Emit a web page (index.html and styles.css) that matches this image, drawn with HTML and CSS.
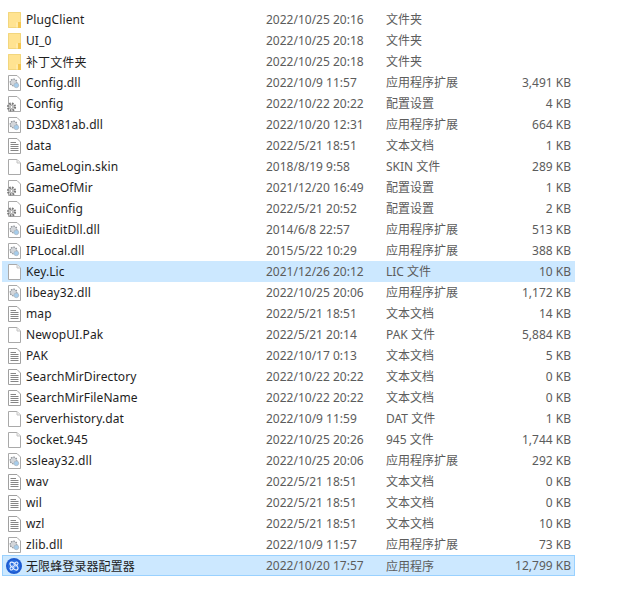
FILE: index.html
```html
<!DOCTYPE html>
<html lang="zh-CN">
<head>
  <meta charset="UTF-8">
  <title>文件列表</title>
  <link rel="stylesheet" href="styles.css">
</head>
<body>
  <!-- shared file type icons -->
  <svg class="defs" width="0" height="0">
    <symbol id="i-folder" viewBox="0 0 16 16">
      <path d="M2 0H15V16H2Z" fill="#ffe391"/>
      <path d="M2.500 .5H14.500V15.500H2.500Z" fill="none" stroke="#f2d67e"/>
      <path d="M12 10H15V16H12Z" fill="#f5c64f"/>
      <path d="M11 10.500V15.500" stroke="#fff1c4"/>
    </symbol>
    <symbol id="i-page" viewBox="0 0 16 16">
      <path d="M2.500 .5H11L14.500 4V15.500H2.500Z" fill="#fff" stroke="#a9a9a9"/>
      <path d="M11 .5V4H14.500" fill="#eee" stroke="#c4c4c4"/>
    </symbol>
    <symbol id="i-text" viewBox="0 0 16 16">
      <path d="M2.500 .5H11L14.500 4V15.500H2.500Z" fill="#fff" stroke="#a0a0a0"/>
      <path d="M4.500 4.500H10M4.500 6.500H12.500M4.500 8.500H12.500M4.500 10.500H12.500M4.500 12.500H12.500" stroke="#858585"/>
    </symbol>
    <symbol id="i-dll" viewBox="0 0 16 16">
      <path d="M2.500 .5H11L14.500 4V15.500H2.500Z" fill="#fff" stroke="#a9a9a9"/>
      <circle cx="7.500" cy="7.500" r="3.300" fill="#d3d6da" stroke="#888c92" stroke-width="1.300" stroke-dasharray="1.500 1"/>
      <circle cx="10.300" cy="10.300" r="2.400" fill="#a6cdec" stroke="#a9b6c2" stroke-width=".8"/>
    </symbol>
    <symbol id="i-config" viewBox="0 0 16 16">
      <path d="M2.500 .5H11L14.500 4V15.500H2.500Z" fill="#fff" stroke="#a9a9a9"/>
      <circle cx="5.500" cy="11" r="3.500" fill="#dcdcdc" stroke="#777" stroke-width="2.200" stroke-dasharray="1.600 1.150"/>
      <circle cx="5.500" cy="11" r="1.500" fill="#fff" stroke="#888" stroke-width=".7"/>
    </symbol>
    <symbol id="i-app" viewBox="0 0 16 16">
      <circle cx="8" cy="8" r="8" fill="#1d5bd1"/>
      <circle cx="8" cy="8" r="6" fill="#2a6fe0"/>
      <ellipse cx="8" cy="8" rx="5" ry="2.300" transform="rotate(45 8 8)" fill="none" stroke="#e4edff" stroke-width="1.200"/>
      <ellipse cx="6" cy="10" rx="2.300" ry="1.500" transform="rotate(-45 6 10)" fill="none" stroke="#e4edff"/>
      <ellipse cx="10" cy="6" rx="2.300" ry="1.500" transform="rotate(-45 10 6)" fill="none" stroke="#e4edff"/>
    </symbol>
  </svg>

  <div class="file-list">
    <div class="row"><div class="name"><svg class="icon"><use href="#i-folder"/></svg>PlugClient</div><div class="date">2022/10/25 20:16</div><div class="type">文件夹</div><div class="size"></div></div>
    <div class="row"><div class="name"><svg class="icon"><use href="#i-folder"/></svg>UI_0</div><div class="date">2022/10/25 20:18</div><div class="type">文件夹</div><div class="size"></div></div>
    <div class="row"><div class="name"><svg class="icon"><use href="#i-folder"/></svg>补丁文件夹</div><div class="date">2022/10/25 20:18</div><div class="type">文件夹</div><div class="size"></div></div>
    <div class="row"><div class="name"><svg class="icon"><use href="#i-dll"/></svg>Config.dll</div><div class="date">2022/10/9 11:57</div><div class="type">应用程序扩展</div><div class="size">3,491 KB</div></div>
    <div class="row"><div class="name"><svg class="icon"><use href="#i-config"/></svg>Config</div><div class="date">2022/10/22 20:22</div><div class="type">配置设置</div><div class="size">4 KB</div></div>
    <div class="row"><div class="name"><svg class="icon"><use href="#i-dll"/></svg>D3DX81ab.dll</div><div class="date">2022/10/20 12:31</div><div class="type">应用程序扩展</div><div class="size">664 KB</div></div>
    <div class="row"><div class="name"><svg class="icon"><use href="#i-text"/></svg>data</div><div class="date">2022/5/21 18:51</div><div class="type">文本文档</div><div class="size">1 KB</div></div>
    <div class="row"><div class="name"><svg class="icon"><use href="#i-page"/></svg>GameLogin.skin</div><div class="date">2018/8/19 9:58</div><div class="type">SKIN 文件</div><div class="size">289 KB</div></div>
    <div class="row"><div class="name"><svg class="icon"><use href="#i-config"/></svg>GameOfMir</div><div class="date">2021/12/20 16:49</div><div class="type">配置设置</div><div class="size">1 KB</div></div>
    <div class="row"><div class="name"><svg class="icon"><use href="#i-config"/></svg>GuiConfig</div><div class="date">2022/5/21 20:52</div><div class="type">配置设置</div><div class="size">2 KB</div></div>
    <div class="row"><div class="name"><svg class="icon"><use href="#i-dll"/></svg>GuiEditDll.dll</div><div class="date">2014/6/8 22:57</div><div class="type">应用程序扩展</div><div class="size">513 KB</div></div>
    <div class="row"><div class="name"><svg class="icon"><use href="#i-dll"/></svg>IPLocal.dll</div><div class="date">2015/5/22 10:29</div><div class="type">应用程序扩展</div><div class="size">388 KB</div></div>
    <div class="row selected"><div class="name"><svg class="icon"><use href="#i-page"/></svg>Key.Lic</div><div class="date">2021/12/26 20:12</div><div class="type">LIC 文件</div><div class="size">10 KB</div></div>
    <div class="row"><div class="name"><svg class="icon"><use href="#i-dll"/></svg>libeay32.dll</div><div class="date">2022/10/25 20:06</div><div class="type">应用程序扩展</div><div class="size">1,172 KB</div></div>
    <div class="row"><div class="name"><svg class="icon"><use href="#i-text"/></svg>map</div><div class="date">2022/5/21 18:51</div><div class="type">文本文档</div><div class="size">14 KB</div></div>
    <div class="row"><div class="name"><svg class="icon"><use href="#i-page"/></svg>NewopUI.Pak</div><div class="date">2022/5/21 20:14</div><div class="type">PAK 文件</div><div class="size">5,884 KB</div></div>
    <div class="row"><div class="name"><svg class="icon"><use href="#i-text"/></svg>PAK</div><div class="date">2022/10/17 0:13</div><div class="type">文本文档</div><div class="size">5 KB</div></div>
    <div class="row"><div class="name"><svg class="icon"><use href="#i-text"/></svg>SearchMirDirectory</div><div class="date">2022/10/22 20:22</div><div class="type">文本文档</div><div class="size">0 KB</div></div>
    <div class="row"><div class="name"><svg class="icon"><use href="#i-text"/></svg>SearchMirFileName</div><div class="date">2022/10/22 20:22</div><div class="type">文本文档</div><div class="size">0 KB</div></div>
    <div class="row"><div class="name"><svg class="icon"><use href="#i-page"/></svg>Serverhistory.dat</div><div class="date">2022/10/9 11:59</div><div class="type">DAT 文件</div><div class="size">1 KB</div></div>
    <div class="row"><div class="name"><svg class="icon"><use href="#i-page"/></svg>Socket.945</div><div class="date">2022/10/25 20:26</div><div class="type">945 文件</div><div class="size">1,744 KB</div></div>
    <div class="row"><div class="name"><svg class="icon"><use href="#i-dll"/></svg>ssleay32.dll</div><div class="date">2022/10/25 20:06</div><div class="type">应用程序扩展</div><div class="size">292 KB</div></div>
    <div class="row"><div class="name"><svg class="icon"><use href="#i-text"/></svg>wav</div><div class="date">2022/5/21 18:51</div><div class="type">文本文档</div><div class="size">0 KB</div></div>
    <div class="row"><div class="name"><svg class="icon"><use href="#i-text"/></svg>wil</div><div class="date">2022/5/21 18:51</div><div class="type">文本文档</div><div class="size">0 KB</div></div>
    <div class="row"><div class="name"><svg class="icon"><use href="#i-text"/></svg>wzl</div><div class="date">2022/5/21 18:51</div><div class="type">文本文档</div><div class="size">10 KB</div></div>
    <div class="row"><div class="name"><svg class="icon"><use href="#i-dll"/></svg>zlib.dll</div><div class="date">2022/10/9 11:57</div><div class="type">应用程序扩展</div><div class="size">73 KB</div></div>
    <div class="row focused"><div class="name"><svg class="icon"><use href="#i-app"/></svg>无限蜂登录器配置器</div><div class="date">2022/10/20 17:57</div><div class="type">应用程序</div><div class="size">12,799 KB</div></div>
  </div>
</body>
</html>
```

FILE: styles.css
```css
body {
  margin: 0;
  background-color: #fff;
  font-family: "Noto Sans", "Noto Sans CJK SC", sans-serif;
  font-size: 12px;
  overflow: hidden;
}

.defs {
  position: absolute;
}

.file-list {
  width: 573px;
  margin-left: 2px;
  padding-top: 9px;
}

.row {
  display: grid;
  grid-template-columns: 264px 120px 1fr 80px;
  align-items: center;
  height: 21px;
  box-sizing: border-box;
  color: #5c5c5c;
  white-space: nowrap;
}

.row.selected {
  background-color: #cce8ff;
}

/* last row has the focus border */
.row.focused {
  grid-template-columns: 263px 120px 1fr 80px;
  background-color: #cce8ff;
  border: 1px solid #99d1ff;
}

.name {
  display: flex;
  align-items: center;
  gap: 4px;
  padding-left: 4px;
  color: #1e1e1e;
  letter-spacing: 0.1px;
}

.focused .name {
  padding-left: 3px;
}

.icon {
  width: 16px;
  height: 16px;
  flex-shrink: 0;
}

.type {
  padding-bottom: 2px;
}

.focused .type {
  padding-bottom: 0;
}

.size {
  text-align: right;
  padding-right: 4px;
}

.focused .size {
  padding-right: 3px;
}
```
